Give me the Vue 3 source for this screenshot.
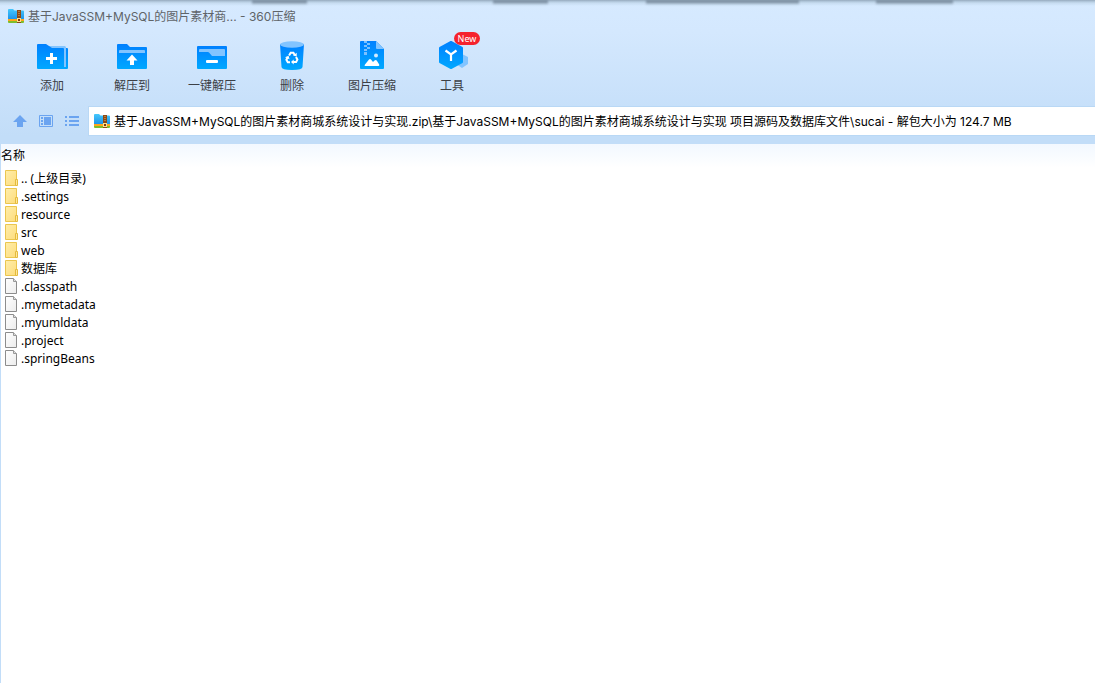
<script setup>
import { ref } from 'vue'

const address = ref('基于JavaSSM+MySQL的图片素材商城系统设计与实现.zip\\基于JavaSSM+MySQL的图片素材商城系统设计与实现 项目源码及数据库文件\\sucai - 解包大小为 124.7 MB')
const tools = [
  { id: 'add', label: '添加' },
  { id: 'extract', label: '解压到' },
  { id: 'quick', label: '一键解压' },
  { id: 'delete', label: '删除' },
  { id: 'image', label: '图片压缩' },
  { id: 'tools', label: '工具', badge: 'New' }
]
const entries = [
  { name: '.. (上级目录)', folder: true },
  { name: '.settings', folder: true },
  { name: 'resource', folder: true },
  { name: 'src', folder: true },
  { name: 'web', folder: true },
  { name: '数据库', folder: true },
  { name: '.classpath' },
  { name: '.mymetadata' },
  { name: '.myumldata' },
  { name: '.project' },
  { name: '.springBeans' }
]
</script>

<template>
  <div class="window">
    <svg class="defs" width="0" height="0" aria-hidden="true">
      <defs>
        <linearGradient id="blue" x1="0" y1="0" x2="0" y2="1">
          <stop offset="0" stop-color="#0080ff" />
          <stop offset="1" stop-color="#00a8ff" />
        </linearGradient>
        <linearGradient id="sky" x1="0" y1="0" x2="0" y2="1">
          <stop offset="0" stop-color="#45c8fc" />
          <stop offset="1" stop-color="#1a8fe8" />
        </linearGradient>
        <linearGradient id="yellow" x1="0" y1="0" x2="1" y2="1">
          <stop offset="0" stop-color="#ffeeaa" />
          <stop offset="1" stop-color="#fddc7c" />
        </linearGradient>
        <linearGradient id="paper" x1="0" y1="0" x2="1" y2="1">
          <stop offset="0" stop-color="#ffffff" />
          <stop offset="1" stop-color="#ececec" />
        </linearGradient>
        <symbol id="zip" viewBox="0 0 16 14">
          <path d="M0 1q0-1 1-1h4l1.500 1.500H15q1 0 1 1V11H0z" fill="url(#sky)" />
          <path d="M0 10h16v2H0z" fill="#ffa51a" />
          <path d="M0 12h16v1q0 1-1 1H1q-1 0-1-1z" fill="#7dbd2c" />
          <path d="M9 1h4v13H9z" fill="#8b4a16" />
          <path d="M10 2h2v1h-2zM10 4h2v1h-2zM10 6h2v1h-2z" fill="#b97a3c" />
          <path d="M9 9h4v4H9z" fill="#ffdf8a" />
          <path d="M10 10h2v2h-2z" fill="#7b3b10" />
        </symbol>
      </defs>
    </svg>

    <div class="shadow" aria-hidden="true">
      <i class="dark d1"></i><i class="dark d2"></i><i class="dark d3"></i><i class="dark d4"></i>
    </div>

    <header class="title">
      <svg width="16" height="14" aria-hidden="true"><use href="#zip" /></svg>
      <span>基于JavaSSM+MySQL的图片素材商... - 360压缩</span>
    </header>

    <nav class="tools">
      <button v-for="t in tools" :key="t.id" type="button" class="tool">
        <span class="icon">
          <svg width="36" height="32" viewBox="0 0 36 32" aria-hidden="true">
            <template v-if="t.id === 'add'">
              <path d="M3 5q0-1 1-1h8l3 2h14.500q1.500 0 1.500 1.500V8h2q1 0 1 1v19q0 1-1 1H4q-1 0-1-1z" fill="url(#blue)" />
              <path d="M15 6h15.500q1.500 0 1.500 1.500V27h-2V9q0-1-1-1H18z" fill="#82c4ff" />
              <path d="M16 13h3v4h4v3h-4v4h-3v-4h-4v-3h4z" fill="#fff" />
            </template>
            <template v-else-if="t.id === 'extract'">
              <path d="M3 5q0-1 1-1h9l3 3h16q1 0 1 1v20q0 1-1 1H4q-1 0-1-1z" fill="url(#blue)" />
              <path d="M5 13v-2q0-1 1-1h24q1 0 1 1v2z" fill="#82c4ff" />
              <path d="M18 14.500l5.500 6H20V25h-4v-4.500h-3.500z" fill="#fff" />
            </template>
            <template v-else-if="t.id === 'quick'">
              <rect x="3" y="6" width="30" height="23" rx="1" fill="url(#blue)" />
              <path d="M5 12v-2q0-1 1-1h24q1 0 1 1v6H18l-3-3.500q-.500-.500-1-.500z" fill="#82c4ff" />
              <rect x="12" y="20" width="12" height="3" rx="1" fill="#fff" />
            </template>
            <template v-else-if="t.id === 'delete'">
              <path d="M6 4h24l-1.500 23q0 3-10.500 3T7.500 27z" fill="url(#blue)" />
              <ellipse cx="18" cy="4.500" rx="12" ry="3.200" fill="#82c4ff" />
              <path d="M15.100 15.500l1.600-2.800h2.700l1.300 2.300M22 17l1.400 2.600-1.300 2.500h-3M16 22.200h-2.200l-1.400-2.500 1.200-2.100" fill="none" stroke="#fff" stroke-width="2" />
              <path d="M22.700 12.800v3.600l-3.600-.8zM19.700 19.500v5l-2.700-2.400zM11 17.300l3.600-1.500.9 3.500z" fill="#fff" />
            </template>
            <template v-else-if="t.id === 'image'">
              <path d="M6 2q0-1 1-1h15l8 8v19q0 1-1 1H7q-1 0-1-1z" fill="url(#blue)" />
              <path d="M22 1l8 8h-7q-1 0-1-1z" fill="#82c4ff" />
              <path d="M10 1h3v2h-3zM13 3h3v2h-3zM10 5h3v2h-3zM13 7h3v2h-3zM10 9h3v2h-3zM10 12h3v3h-3z" fill="#7cc0ff" />
              <path d="M11 26q-1-.500 0-1.500l4-5q1-.800 2 0l2 2.500 1.500-1.500q1.200-1 2.200 0l2.500 4q.500 1.500-1 1.500z" fill="#fff" />
              <circle cx="22" cy="15.500" r="2" fill="#d2ebff" />
            </template>
            <template v-else>
              <path d="M28 14l6 3v7l-6 4-6-4z" fill="#82c4ff" />
              <path d="M16.500 1q.500-.200 1 0l11 6q.500.500.500 1v14q0 .500-.500 1l-11 6q-.500.200-1 0l-11-6q-.500-.500-.500-1V8q0-.500.500-1z" fill="url(#blue)" />
              <path d="M11.500 10.500l5.500 4 5.500-4M17 14.500V21" fill="none" stroke="#fff" stroke-width="2.200" />
            </template>
          </svg>
          <b v-if="t.badge" class="badge">{{ t.badge }}</b>
        </span>
        <span>{{ t.label }}</span>
      </button>
    </nav>

    <div class="location">
      <button type="button" class="nav" aria-label="上一级">
        <svg width="16" height="16"><path d="M8 2l7 7h-4v5H5V9H1z" fill="#6ba4f0" /></svg>
      </button>
      <button type="button" class="nav" aria-label="预览">
        <svg width="16" height="16" fill="#6ba4f0">
          <path d="M1.500 2.500h13v11h-13z" fill="none" stroke="#6ba4f0" />
          <path d="M3 4h2v2H3zM3 7h2v2H3zM3 10h2v2H3zM6 4h7v8H6z" />
        </svg>
      </button>
      <button type="button" class="nav" aria-label="列表">
        <svg width="16" height="16"><path d="M1 3h2v2H1zM1 7h2v2H1zM1 11h2v2H1zM5 3h10v2H5zM5 7h10v2H5zM5 11h10v2H5z" fill="#6ba4f0" /></svg>
      </button>
      <label class="address">
        <svg width="16" height="14" aria-hidden="true"><use href="#zip" /></svg>
        <input v-model="address" type="text" aria-label="路径" spellcheck="false" />
      </label>
    </div>

    <main class="files">
      <table>
        <thead><tr><th scope="col">名称</th></tr></thead>
        <tbody>
          <tr v-for="e in entries" :key="e.name">
            <td>
              <span class="entry">
                <svg v-if="e.folder" width="14" height="18" aria-hidden="true">
                  <path d="M1.500 .5h11v15h-11z" fill="url(#yellow)" stroke="#ebc64f" />
                  <path d="M11.500 9.500h2v6h-2z" fill="#ffe79a" stroke="#e4bb3e" />
                </svg>
                <svg v-else width="14" height="18" aria-hidden="true">
                  <path d="M1.500 .5h8l3 3v12h-11z" fill="url(#paper)" stroke="#8c8c8c" />
                  <path d="M9.500 .5v3h3" fill="#ddd" stroke="#999" />
                </svg>
                <span>{{ e.name }}</span>
              </span>
            </td>
          </tr>
        </tbody>
      </table>
    </main>
  </div>
</template>

<style>
body {
  background: #fff;
}
</style>

<style scoped>
.window {
  position: relative;
  display: flex;
  flex-direction: column;
  min-height: 100vh;
  background: linear-gradient(#d6eaff 0, #d4e8fe 32px, #c2ddf8 136px, #c2ddf8 100%);
  color: #000;
  font: 12px/18px "Noto Sans", "Noto Sans CJK SC", sans-serif;
  overflow: hidden;
}
.defs {
  position: absolute;
}
button {
  border: 0;
  padding: 0;
  background: none;
  color: inherit;
  font: inherit;
}
.shadow {
  position: absolute;
  inset: 0 0 auto;
  height: 6px;
  background: linear-gradient(#94a8bb 0, #a9bfd3 1px, #c6dcf0 3px, transparent);
}
.dark {
  position: absolute;
  top: 0;
  height: 5px;
  background: linear-gradient(#687a8d, #8598ab 2px, transparent);
  filter: blur(1px);
}
.d1 { left: 23%; width: 5%; }
.d2 { left: 45%; width: 5%; }
.d3 { left: 59%; width: 14%; }
.d4 { left: 80%; width: 7%; }
.title {
  display: flex;
  align-items: center;
  gap: 4px;
  height: 32px;
  padding-left: 8px;
  box-sizing: border-box;
  color: #5f6468;
  font-family: Inter, "Noto Sans CJK SC", sans-serif;
}
.title span {
  padding-top: 2px;
}
.tools {
  display: flex;
  height: 75px;
  padding-left: 12px;
}
.tool {
  display: flex;
  flex-direction: column;
  align-items: center;
  gap: 5px;
  width: 80px;
  padding-top: 8px;
  color: #3c4046;
}
.icon {
  position: relative;
  display: block;
  height: 32px;
}
.icon svg {
  display: block;
}
.badge {
  position: absolute;
  left: 20px;
  top: -8px;
  width: 26px;
  border-radius: 7px;
  background: #f5222d;
  color: #fff;
  font-size: 9px;
  font-weight: 400;
  line-height: 13px;
}
.location {
  display: flex;
  align-items: center;
  height: 37px;
  padding: 0 0 9px 12px;
  box-sizing: border-box;
  gap: 10px;
}
.nav {
  display: flex;
}
.address {
  display: flex;
  flex: 1;
  align-items: center;
  gap: 4px;
  height: 28px;
  margin-left: -1px;
  padding-left: 5px;
  background: #fff;
  box-shadow: 0 0 0 1px #b9d8f5;
}
.address input {
  flex: 1;
  min-width: 0;
  padding: 2px 0 0;
  border: 0;
  outline: 0;
  background: none;
  color: #000;
  font: inherit;
  font-family: Inter, "Noto Sans CJK SC", sans-serif;
}
.files {
  flex: 1;
  margin-left: 1px;
  background: linear-gradient(#f2f8ff, #fff 24px);
}
table {
  width: 100%;
  border-collapse: collapse;
}
th {
  height: 24px;
  padding: 0;
  box-sizing: border-box;
  font-weight: 400;
  text-align: left;
}
tbody::before {
  content: "";
  display: block;
  height: 2px;
}
td {
  padding: 0;
}
.entry {
  display: flex;
  gap: 3px;
  height: 18px;
  padding-left: 3px;
}
</style>
